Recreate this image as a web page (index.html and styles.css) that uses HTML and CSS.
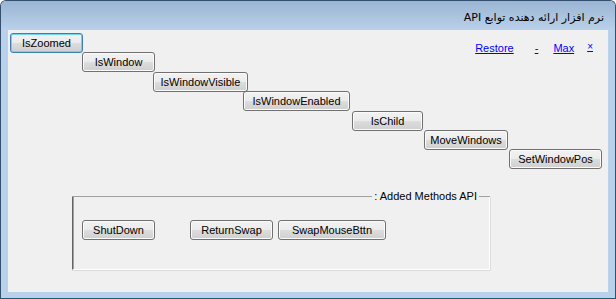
FILE: index.html
```html
<!DOCTYPE html>
<html lang="fa">
<head>
  <meta charset="UTF-8" />
  <title>نرم افزار ارائه دهنده توابع API</title>
  <link rel="stylesheet" href="styles.css">
</head>
<body>
  <div class="window">
    <div class="titlebar">
      <span class="title" dir="rtl">نرم افزار ارائه دهنده توابع API</span>
    </div>
    <div class="client">
      <div class="top">
        <!-- pasos de botones -->
        <div class="stairs">
          <button class="btn s1 focus">IsZoomed</button>
          <button class="btn s2">IsWindow</button>
          <button class="btn s3">IsWindowVisible</button>
          <button class="btn s4">IsWindowEnabled</button>
          <button class="btn s5">IsChild</button>
          <button class="btn s6">MoveWindows</button>
          <button class="btn s7">SetWindowPos</button>
        </div>
        <nav class="links">
          <a href="#" class="lnk restore">Restore</a>
          <a href="#" class="lnk dash">-</a>
          <a href="#" class="lnk max">Max</a>
          <a href="#" class="lnk close">×</a>
        </nav>
      </div>

      <div class="group">
        <div class="group-head"><span>: Added Methods API</span></div>
        <div class="group-body">
          <button class="btn g1">ShutDown</button>
          <button class="btn g2">ReturnSwap</button>
          <button class="btn g3">SwapMouseBttn</button>
        </div>
      </div>
    </div>
  </div>
</body>
</html>
```

FILE: styles.css
```css
body { margin: 0; font-family: "Liberation Sans", Arial, sans-serif; font-size: 11px; }

.window { width: 616px; height: 299px; box-sizing: border-box; border: 1px solid #34506e; border-bottom-color: #1f5d6e; border-radius: 6px 6px 0 0; background: #b9d1ea; padding: 0 7px 6px 7px; display: flex; flex-direction: column; }
.titlebar { height: 29px; margin: 0 -7px; padding: 0 11px 0 0; display: flex; justify-content: flex-end; align-items: center; background: linear-gradient(#9ab5d3, #b9d1ea); border-radius: 5px 5px 0 0; }
.title { font-family: "DejaVu Sans", sans-serif; font-size: 11px; color: #000; padding-top: 3px; }

.client { flex: 1; background: #f0f0f0; padding: 3px 0 0 2px; }

.top { display: grid; }
.stairs, .links { grid-area: 1 / 1; }

.stairs { display: grid; grid-template-columns: 72px 71px 90px 109px 72px 85px 93px; grid-auto-rows: 19.4px; }
.s1 { grid-column: 1; grid-row: 1; width: 73px; height: 21px; }
.s2 { grid-column: 2; grid-row: 2; width: 73px; }
.s3 { grid-column: 3; grid-row: 3; width: 95px; }
.s4 { grid-column: 4; grid-row: 4; width: 107px; }
.s5 { grid-column: 5; grid-row: 5; width: 71px; }
.s6 { grid-column: 6; grid-row: 6; width: 84px; }
.s7 { grid-column: 7; grid-row: 7; width: 93px; }

.btn { height: 20px; padding: 0; border: 1px solid #707070; border-radius: 3px; box-shadow: inset 0 0 0 1px #fbfbfb; background: linear-gradient(#f2f2f2 0%, #ebebeb 50%, #dddddd 51%, #cfcfcf 100%); font-family: "Liberation Sans", Arial, sans-serif; font-size: 11px; color: #000; }
.btn.focus { border-color: #3c7fb1; box-shadow: inset 0 0 0 1px #6fd3f5; }

.links { justify-self: end; align-self: start; margin: 9px 15px 0 0; display: flex; align-items: flex-start; }
.lnk { color: #0000ff; text-decoration: underline; font-size: 11px; line-height: 13px; }
.dash { margin-left: 21px; }
.max { margin-left: 15px; }
.close { margin-left: 13px; margin-top: -2px; font-size: 10px; }

.group { width: 418px; margin: 27px 0 0 62px; }
.group-head { display: flex; align-items: center; height: 13px; margin-top: -6px; }
.group-head::before { content: ""; flex: 1; border-top: 1px solid #a0a0a0; }
.group-head::after { content: ""; width: 11px; border-top: 1px solid #a0a0a0; }
.group-head span { padding: 0 2px; color: #000; }
.group-body { height: 73px; margin-top: -6px; box-sizing: border-box; border-left: 1px solid #646464; border-right: 1px solid #ffffff; border-bottom: 1px solid #ffffff; box-shadow: inset 1px 0 #a0a0a0, 0 1px #dcdcdc, 1px 0 #dcdcdc; display: flex; align-items: flex-start; padding: 23px 0 0 9px; }
.g1 { width: 73px; }
.g2 { width: 83px; margin-left: 35px; }
.g3 { width: 108px; margin-left: 5px; }
```
